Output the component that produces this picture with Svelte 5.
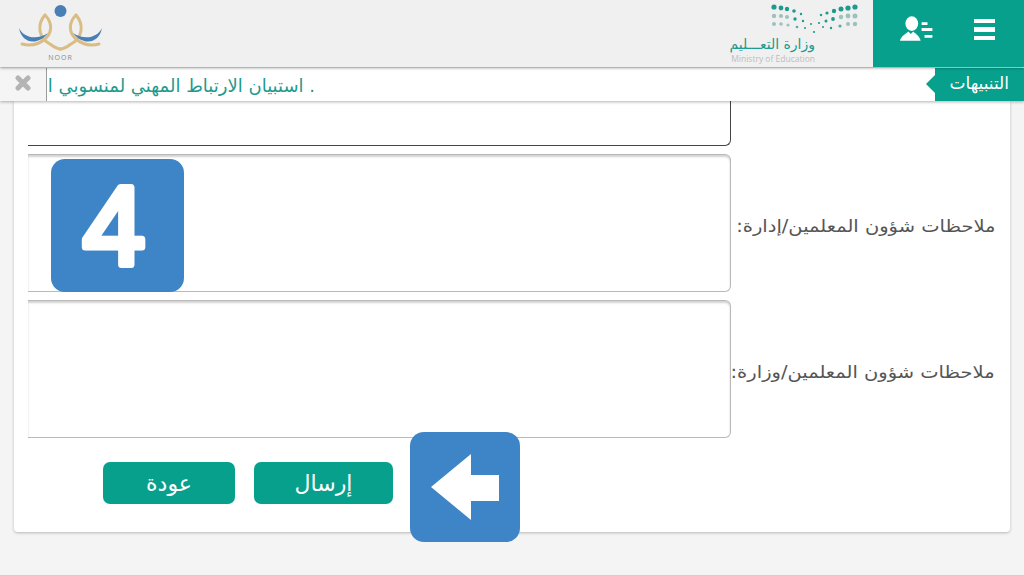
<script>
  // dots of the ministry logo: x, y, radius, colour
  const dark = '#1d9a8e';
  const mid = '#55aba3';
  const pale = '#9cc2bd';
  const dots = [
    [3, 7, 2.6, dark], [10, 8, 2.4, dark], [16, 9, 2.2, dark], [23, 11, 1.8, dark], [30, 14, 1.2, dark],
    [84, 7, 2.6, dark], [77, 8, 2.6, dark], [70, 9, 2.5, dark], [63, 11, 2.2, dark], [56, 13, 1.6, dark], [50, 15, 1.2, dark],
    [3, 16, 2.2, pale], [10, 16, 2.1, pale], [16, 17, 2, pale], [24, 19, 1.7, dark], [32, 21, 1.2, dark], [40, 24, 1, dark],
    [84, 16, 2.5, pale], [77, 16, 2.4, pale], [70, 17, 2.2, pale], [62, 19, 1.9, dark], [55, 21, 1.5, dark], [48, 23, 1.1, dark],
    [3, 24, 2, pale], [10, 24, 1.8, pale], [17, 25, 1.6, pale], [26, 27, 1.3, mid], [34, 28, 1, dark],
    [84, 24, 2.2, pale], [77, 24, 2, pale], [69, 26, 1.6, mid], [60, 28, 1.2, dark], [52, 27, 1, dark], [43, 32, 1.1, dark]
  ];
</script>

<div class="page">
  <header class="topbar">
    <div class="noor">
      <svg width="120" height="67" viewBox="0 0 120 67">
        <circle cx="60.5" cy="11" r="6" fill="#4a7fb5" />
        <g fill="none" stroke="#d9bd85" stroke-width="3" stroke-linecap="round">
          <path d="M45 15C37 24 38 38 50 44C54 47 58 49 61 49" />
          <path d="M45 15C52 22 53 32 45 39C38 45 30 46 22 44" />
          <path d="M76 15C84 24 83 38 71 44C67 47 63 49 60 49" />
          <path d="M76 15C69 22 68 32 76 39C83 45 91 46 99 44" />
        </g>
        <path d="M19 28C23 37 36 41 48 33C38 46 22 44 19 28Z" fill="#4a7fb5" />
        <path d="M102 28C98 37 85 41 73 33C83 46 99 44 102 28Z" fill="#4a7fb5" />
        <text class="noor-text" x="60.5" y="60" text-anchor="middle">NOOR</text>
      </svg>
    </div>

    <div class="ministry">
      <svg class="dots" width="90" height="36" viewBox="0 0 90 36">
        {#each dots as d}
          <circle cx={d[0]} cy={d[1]} r={d[2]} fill={d[3]} />
        {/each}
      </svg>
      <div class="ministry-ar">وزارة التعـــليم</div>
      <div class="ministry-en">Ministry of Education</div>
    </div>

    <div class="actions">
      <svg width="34" height="26" viewBox="0 0 34 26">
        <ellipse cx="12" cy="7.5" rx="6.5" ry="7.5" fill="#fff" />
        <path d="M0 25C1 20 6 18 8.500 15.500L11 18L13.500 15.500C16 18 20 20 21 25Z" fill="#fff" />
        <path d="M22 6H28V9H22ZM22 12H33V15H22ZM25 19H33V22H25Z" fill="#fff" />
      </svg>
      <div class="burger"><span></span><span></span><span></span></div>
    </div>
  </header>

  <div class="alerts">
    <div class="tag">التنبيهات</div>
    <div class="ticker">. استبيان الارتباط المهني لمنسوبي ا</div>
    <div class="close">
      <svg width="16" height="16" viewBox="0 0 16 16">
        <path d="M3 3L13 13M13 3L3 13" stroke="#b4b4b4" stroke-width="5" stroke-linecap="round" />
      </svg>
    </div>
  </div>

  <main class="card">
    <div class="field first">
      <div class="label"></div>
      <div class="box"></div>
    </div>
    <div class="field">
      <div class="label"><span>ملاحظات شؤون المعلمين/إدارة:</span></div>
      <div class="box"></div>
    </div>
    <div class="field">
      <div class="label"><span>ملاحظات شؤون المعلمين/وزارة:</span></div>
      <div class="box"></div>
    </div>
    <div class="buttons">
      <button class="send">إرسال</button>
      <button class="back">عودة</button>
    </div>
  </main>

  <div class="badge four">
    <svg width="133" height="133" viewBox="0 0 133 133">
      <text class="digit" x="63" y="104.5" text-anchor="middle">4</text>
    </svg>
  </div>

  <div class="badge arrow">
    <svg width="110" height="110" viewBox="0 0 110 110">
      <path d="M21 55L61 22V43H89V69H61V88Z" fill="#fff" />
    </svg>
  </div>
</div>

<style>
  :global(body) {
    margin: 0;
    overflow: hidden;
  }

  .page {
    position: relative;
    box-sizing: border-box;
    width: 1024px;
    height: 576px;
    overflow: hidden;
    background: #f4f4f4;
    border-bottom: 1px solid #cfcfcf;
    font-family: "DejaVu Sans", sans-serif;
  }

  .topbar {
    position: relative;
    z-index: 3;
    display: flex;
    height: 67px;
    background: #f0f0f0;
    box-shadow: 0 1px 3px rgba(0, 0, 0, 0.35);
  }

  .noor {
    flex: 1;
    height: 67px;
  }

  .noor svg {
    display: block;
  }

  .noor-text {
    font-family: "Open Sans", sans-serif;
    font-size: 7px;
    letter-spacing: 1px;
    fill: #7f8b99;
  }

  .ministry {
    display: flex;
    flex-direction: column;
    align-items: flex-end;
    box-sizing: border-box;
    width: 143px;
    height: 67px;
    padding-right: 12px;
  }

  .dots {
    display: block;
    flex: none;
    height: 36px;
  }

  .ministry-ar {
    width: 86px;
    margin-right: 46px;
    margin-top: 1px;
    direction: rtl;
    font-size: 14px;
    line-height: 15px;
    color: #1d9a8e;
    white-space: nowrap;
    text-align: right;
  }

  .ministry-en {
    width: 86px;
    margin-right: 46px;
    font-family: "Open Sans", sans-serif;
    font-size: 8.5px;
    line-height: 13px;
    color: #bdbdbd;
    white-space: nowrap;
    text-align: right;
  }

  .actions {
    display: flex;
    align-items: center;
    gap: 41px;
    box-sizing: border-box;
    width: 151px;
    height: 67px;
    padding: 0 29px 10px 27px;
    background: #07a08c;
  }

  .burger {
    display: flex;
    flex-direction: column;
    gap: 4px;
    width: 21px;
    margin-top: 2px;
  }

  .burger span {
    height: 4.5px;
    background: #fff;
  }

  .alerts {
    position: relative;
    z-index: 2;
    display: flex;
    flex-direction: row-reverse;
    height: 33px;
    margin-top: 1px;
    background: #fff;
    box-shadow: 0 1px 3px rgba(0, 0, 0, 0.3);
  }

  .tag {
    position: relative;
    box-sizing: border-box;
    width: 89px;
    padding-right: 15px;
    direction: rtl;
    background: #07a08c;
    color: #fff;
    font-size: 17px;
    line-height: 31px;
    white-space: nowrap;
  }

  .tag::before {
    content: "";
    position: absolute;
    left: -9px;
    top: 7px;
    border-top: 9px solid transparent;
    border-bottom: 9px solid transparent;
    border-right: 9px solid #07a08c;
  }

  .ticker {
    flex: 1;
    min-width: 0;
    overflow: hidden;
    direction: rtl;
    padding-right: 620px;
    color: #1d9a8e;
    font-size: 18px;
    line-height: 36px;
    white-space: nowrap;
  }

  .close {
    display: flex;
    align-items: center;
    justify-content: center;
    flex: none;
    width: 46px;
    padding-bottom: 3px;
    background: #f5f5f5;
    border-right: 1px solid #9a9a9a;
  }

  .card {
    margin: 0 14px;
    padding: 0 0 28px 14px;
    background: #fff;
    border-radius: 0 0 4px 4px;
    box-shadow: 0 1px 3px rgba(0, 0, 0, 0.25);
    direction: rtl;
  }

  .field {
    display: flex;
    height: 138px;
    margin-bottom: 8px;
  }

  .field.first {
    height: 45px;
  }

  .label {
    flex: none;
    align-self: center;
    box-sizing: border-box;
    width: 279px;
    padding: 5px 15px 0 0;
    color: #555;
    font-size: 17px;
    white-space: nowrap;
  }

  /* the reference label is set wider than the font's own widths */
  .label span {
    display: inline-block;
    transform: scaleX(1.145);
    transform-origin: right center;
  }

  .box {
    flex: 1;
    box-sizing: border-box;
    border: 1px solid #b9b9b9;
    border-left: 0;
    border-radius: 0 6px 6px 0;
    box-shadow: inset 0 2px 2px rgba(0, 0, 0, 0.18);
  }

  .first .box {
    border-color: #444;
    border-top: 0;
    border-radius: 0 0 6px 0;
    box-shadow: none;
  }

  .buttons {
    display: flex;
    gap: 19px;
    margin-top: 24px;
    padding-right: 617px;
  }

  button {
    height: 42px;
    padding: 0;
    border: 0;
    border-radius: 7px;
    background: #07a08c;
    color: #fff;
    font-family: inherit;
    font-size: 22px;
  }

  .send {
    width: 139px;
  }

  .back {
    width: 132px;
  }

  /* floating help badges over the form */
  .badge {
    position: absolute;
    z-index: 1;
    background: #3d85c6;
    border-radius: 14px;
  }

  .badge svg {
    display: block;
  }

  .four {
    left: 51px;
    top: 159px;
    width: 133px;
    height: 133px;
  }

  .arrow {
    left: 410px;
    top: 432px;
    width: 110px;
    height: 110px;
  }

  .digit {
    font-family: "Liberation Sans", sans-serif;
    font-size: 112px;
    fill: #fff;
    stroke: #fff;
    stroke-width: 7px;
    stroke-linejoin: round;
  }
</style>
